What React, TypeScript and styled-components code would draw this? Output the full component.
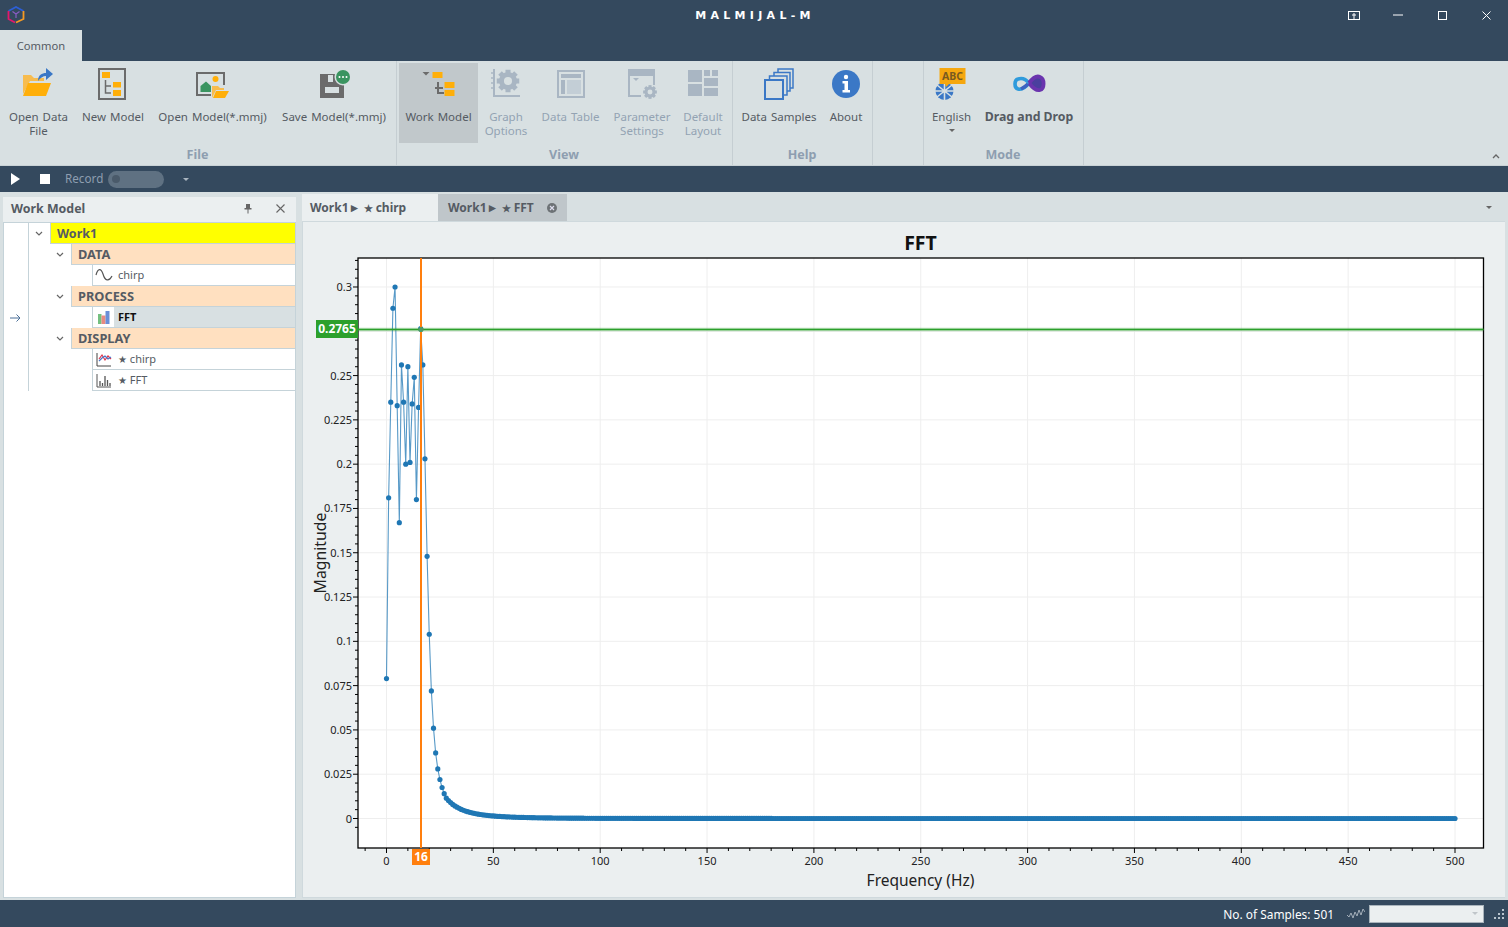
import React from "react"
import styled, { createGlobalStyle } from "styled-components"

const GlobalStyle = createGlobalStyle`
html, body { margin: 0; padding: 0; height: 100%; overflow: hidden; }
body { font-family: "Noto Sans", "Open Sans", sans-serif; font-size: 12px; color: #555b63; }
`
const Page = styled.div`
width: 1508px;
height: 927px;
display: flex;
flex-direction: column;
background: #d8e0e2;
`
const TitleBar = styled.div`
height: 30px;
background: #34495e;
display: grid;
grid-template-columns: 1fr auto 1fr;
align-items: center;
`
const Logo = styled.div`
display: flex;
padding-left: 7px;
`
const AppTitle = styled.div`
color: #fff;
font-family: "DejaVu Sans", sans-serif;
font-weight: bold;
font-size: 11px;
letter-spacing: 4.3px;
padding-left: 2px;
`
const WindowButtons = styled.div`
display: flex;
justify-content: flex-end;
`
const WindowButton = styled.div`
width: 44px;
height: 30px;
display: flex;
align-items: center;
justify-content: center;
`
const TabStrip = styled.div`
height: 31px;
background: #34495e;
display: flex;
`
const RibbonTab = styled.div`
width: 82px;
background: #d8e0e2;
display: flex;
align-items: center;
justify-content: center;
color: #555b63;
font-size: 11.2px;
padding-bottom: 1px;
box-sizing: border-box;
`
const Ribbon = styled.div`
height: 104px;
display: flex;
position: relative;
background: #d8e0e2;
border-bottom: 1px solid #c9d2d6;
`
const Group = styled.div<{ $w: number }>`
width: ${(p) => p.$w}px;
box-sizing: border-box;
border-right: 1px solid #c5ced2;
display: flex;
flex-direction: column;
padding: 2px 0 0 2px;
`
const GroupButtons = styled.div`
display: flex;
height: 80px;
`
const GroupName = styled.div`
text-align: center;
font-weight: bold;
color: #8e9eb0;
font-size: 12.5px;
line-height: 16px;
margin-top: 4px;
padding-right: 3px;
`
const RibbonButton = styled.div<{ $w: number; $active?: boolean; $off?: boolean; $bold?: boolean }>`
width: ${(p) => p.$w}px;
display: flex;
flex-direction: column;
align-items: center;
background: ${(p) => (p.$active ? "#c1c8cb" : "transparent")};
color: ${(p) => (p.$off ? "#93a3b3" : "#555b63")};
font-weight: ${(p) => (p.$bold ? "bold" : "normal")};
font-size: ${(p) => (p.$bold ? 12.3 : 11.5)}px;
word-spacing: ${(p) => (p.$bold ? 0 : 1)}px;
`
const IconSlot = styled.div`
height: 47px;
width: 100%;
flex: none;
display: flex;
justify-content: center;
`
const ButtonLabel = styled.div`
text-align: center;
line-height: 14px;
white-space: pre-line;
`
const Caret = styled.div`
width: 0;
height: 0;
margin-top: 5px;
border-left: 3px solid transparent;
border-right: 3px solid transparent;
border-top: 3px solid #666;
`
const Collapse = styled.div`
position: absolute;
right: 8px;
bottom: 6px;
display: flex;
`
const QuickBar = styled.div`
height: 26px;
background: #34495e;
display: flex;
align-items: center;
padding-left: 11px;
color: #8e9eb0;
`
const PlayIcon = styled.div`
width: 0;
height: 0;
border-top: 6px solid transparent;
border-bottom: 6px solid transparent;
border-left: 9px solid #fff;
`
const StopIcon = styled.div`
width: 10px;
height: 10px;
background: #fff;
margin-left: 20px;
`
const RecordLabel = styled.div`
margin-left: 15px;
font-size: 11.7px;
padding-bottom: 2px;
`
const Toggle = styled.div`
width: 56px;
height: 17px;
border-radius: 9px;
background: #5f7182;
margin-left: 5px;
display: flex;
align-items: center;
padding-left: 4px;
box-sizing: border-box;
`
const Knob = styled.div`
width: 8px;
height: 8px;
border-radius: 50%;
background: #4a5a6a;
`
const MenuCaret = styled.div`
width: 0;
height: 0;
margin-left: 19px;
border-left: 3.5px solid transparent;
border-right: 3.5px solid transparent;
border-top: 3.5px solid #aab5c0;
`
const Body = styled.div`
flex: 1;
min-height: 0;
display: flex;
padding: 2px 3px 2px 3px;
gap: 6px;
`
const SidePanel = styled.div`
width: 293px;
margin-top: 3px;
display: flex;
flex-direction: column;
`
const PanelHeader = styled.div`
height: 25px;
box-sizing: border-box;
background: #ebeff0;
display: flex;
align-items: center;
padding: 0 0 2px 8px;
font-weight: bold;
font-size: 12.4px;
color: #555b63;
`
const PanelTitle = styled.div`
flex: 1;
`
const PanelAction = styled.div`
width: 32px;
display: flex;
justify-content: center;
`
const Tree = styled.div`
flex: 1;
background: #fff;
border: 1px solid #c5d3d9;
box-sizing: border-box;
`
const TreeRow = styled.div`
height: 21px;
display: flex;
`
const RowMark = styled.div`
width: 25px;
flex: none;
border-right: 1px solid #c5d3d9;
display: flex;
align-items: center;
justify-content: center;
padding-right: 2px;
box-sizing: border-box;
`
const Indent = styled.div<{ $w: number }>`
width: ${(p) => p.$w}px;
flex: none;
display: flex;
align-items: center;
justify-content: center;
padding-right: 2px;
box-sizing: border-box;
`
const RowCell = styled.div<{ $bg: string; $bold?: boolean; $size?: number }>`
flex: 1;
min-width: 0;
box-sizing: border-box;
background: ${(p) => p.$bg};
border-left: 1px solid #c5d3d9;
border-bottom: 1px solid #c5d3d9;
display: flex;
align-items: center;
padding-left: 6px;
font-weight: ${(p) => (p.$bold ? "bold" : "normal")};
font-size: ${(p) => p.$size ?? 11}px;
color: #555b63;
`
const LeafIcon = styled.div`
width: 21px;
height: 20px;
margin-left: -6px;
background: #fff;
flex: none;
display: flex;
align-items: center;
justify-content: center;
`
const LeafText = styled.div<{ $strong?: boolean }>`
padding: 0 0 1px 4px;
font-weight: ${(p) => (p.$strong ? "bold" : "normal")};
color: ${(p) => (p.$strong ? "#111" : "#555b63")};
`
const Workspace = styled.div`
flex: 1;
min-width: 0;
display: flex;
flex-direction: column;
`
const DocTabs = styled.div`
height: 27px;
display: flex;
position: relative;
`
const DocTab = styled.div<{ $w: number; $selected?: boolean }>`
width: ${(p) => p.$w}px;
box-sizing: border-box;
background: ${(p) => (p.$selected ? "#ebeff0" : "#bfc6ca")};
display: flex;
align-items: center;
padding-left: ${(p) => (p.$selected ? 8 : 10)}px;
font-weight: bold;
font-size: 12px;
color: #555b63;
`
const CloseDot = styled.div`
margin-left: 13px;
display: flex;
`
const TabMenu = styled.div`
position: absolute;
right: 13px;
top: 12px;
width: 0;
height: 0;
border-left: 3px solid transparent;
border-right: 3px solid transparent;
border-top: 3px solid #666;
`
const ChartPanel = styled.div`
flex: 1;
min-height: 0;
background: #ebeff0;
border: 1px solid #cfd9dd;
border-right: none;
box-sizing: border-box;
`
const ChartSvg = styled.svg`
display: block;
width: 100%;
height: 100%;
font-family: "Noto Sans", "Open Sans", sans-serif;
`
const StatusBar = styled.div`
height: 27px;
background: #34495e;
display: flex;
align-items: center;
justify-content: flex-end;
color: #fff;
padding-right: 4px;
font-size: 11.9px;
`
const StatusSelect = styled.div`
width: 115px;
height: 18px;
box-sizing: border-box;
background: #ebeff0;
border: 1px solid #a9b4bc;
margin: 0 10px 0 4px;
display: flex;
align-items: center;
justify-content: flex-end;
padding-right: 5px;
`
const SelectCaret = styled.div`
width: 0;
height: 0;
border-left: 3px solid transparent;
border-right: 3px solid transparent;
border-top: 3px solid #c0c6ca;
`
const StatusText = styled.div`
margin-right: 13px;
`
const StarMark = styled.span`
font-size: 10px;
`

const AMBER = "#ffaf0a"
const GREY = "#6b6b6b"
const OFF = "#a9b6c3"
const BLUE = "#3b78c6"
const FACE = "#d8e0e2"

const Gear = ({ cx, cy, r, fill, hole }: { cx: number; cy: number; r: number; fill: string; hole: string }) => (
    <g>
        {[0, 45, 90, 135].map((a) => (
            <rect key={a} x={cx - r * 0.28} y={cy - r * 1.25} width={r * 0.56} height={r * 2.5} fill={fill} transform={`rotate(${a} ${cx} ${cy})`} />
        ))}
        <circle cx={cx} cy={cy} r={r} fill={fill} />
        <circle cx={cx} cy={cy} r={r * 0.45} fill={hole} />
    </g>
)

const Sketch: React.FC<{ w: number; h: number; mt?: number; children: React.ReactNode }> = ({ w, h, mt = 0, children }) => (
    <svg width={w} height={h} viewBox={`0 0 ${w} ${h}`} style={{ marginTop: mt }}>
        {children}
    </svg>
)

const OpenFileIcon = () => (
    <Sketch w={34} h={36} mt={3}>
        <path d="M1 9 H9 L12 12 H22 V15 H8 L1 28 Z" fill="#f7bc4e" />
        <path d="M6 17 H29 L24 30 H1 Z" fill={AMBER} />
        <path d="M16 15 C16 9 20 7 24 7 V2 L31 8 L24 14 V10 C21 10 18 12 16 15 Z" fill={BLUE} />
    </Sketch>
)
const NewModelIcon = () => (
    <Sketch w={30} h={36} mt={5}>
        <rect x="1" y="1" width="26" height="30" fill="none" stroke={GREY} strokeWidth="2" />
        <rect x="4" y="4" width="8" height="6" fill={AMBER} />
        <rect x="15" y="14" width="8" height="5.500" fill={AMBER} />
        <rect x="15" y="22" width="8" height="6" fill={AMBER} />
        <path d="M7.500 12 V25 H13 M7.500 18 H13" fill="none" stroke={GREY} strokeWidth="1.500" />
    </Sketch>
)
const OpenModelIcon = () => (
    <Sketch w={36} h={36} mt={9}>
        <path d="M16 23 H2 V1 H29 V13" fill="none" stroke={GREY} strokeWidth="2" />
        <path d="M5.500 20 V14 L11 9.500 L16 14 V20 Z" fill="#3a9460" />
        <circle cx="20.500" cy="7" r="3" fill={AMBER} />
        <path d="M17 14 H23 L25 16 H29 V18 H21 L17 26 Z" fill="#f7bc4e" />
        <path d="M21 19 H34 L30 26 H18 Z" fill={AMBER} />
    </Sketch>
)
const SaveIcon = () => (
    <Sketch w={36} h={36} mt={2}>
        <path d="M4 9 H24 L28 13 V33 H4 Z M12 10 V17 H17 V10 Z M9 22 V28 H23 V22 Z" fill={GREY} fillRule="evenodd" />
        <circle cx="27" cy="12" r="8.500" fill={FACE} />
        <circle cx="27" cy="12" r="7" fill="#3a9460" />
        <circle cx="23.500" cy="12" r="1" fill="#fff" />
        <circle cx="27" cy="12" r="1" fill="#fff" />
        <circle cx="30.500" cy="12" r="1" fill="#fff" />
    </Sketch>
)
const WorkModelIcon = () => (
    <Sketch w={36} h={36} mt={6}>
        <path d="M1.500 3 H8.500 L5 6.500 Z" fill={GREY} />
        <rect x="11.500" y="3" width="10" height="6" fill={AMBER} />
        <rect x="23.500" y="13" width="10" height="6" fill={AMBER} />
        <rect x="23.500" y="21" width="10" height="6" fill={AMBER} />
        <path d="M17 13 V24 H23 M14 19 H22" fill="none" stroke={GREY} strokeWidth="2" />
    </Sketch>
)
const GraphOptionsIcon = () => (
    <Sketch w={30} h={36} mt={6}>
        <path d="M3 0 V27 H29" fill="none" stroke={OFF} strokeWidth="2" />
        <path d="M0 4 H3 M0 9 H3 M0 14 H3 M0 19 H3" stroke={OFF} strokeWidth="1.500" />
        <Gear cx={17} cy={12} r={9} fill={OFF} hole={FACE} />
    </Sketch>
)
const DataTableIcon = () => (
    <Sketch w={30} h={36} mt={6}>
        <rect x="2" y="2" width="26" height="26" fill="none" stroke={OFF} strokeWidth="2" />
        <rect x="5" y="5" width="20" height="4" fill={OFF} />
        <rect x="5" y="11" width="4" height="14" fill={OFF} />
        <rect x="11" y="11" width="14" height="14" fill="#c3ced6" />
    </Sketch>
)
const ParameterIcon = () => (
    <Sketch w={32} h={36} mt={6}>
        <path d="M15 27 H3 V1 H28 V16" fill="none" stroke={OFF} strokeWidth="2" />
        <rect x="3" y="1" width="25" height="6" fill={OFF} />
        <path d="M7 9 H13 L10 12 Z" fill={OFF} />
        <Gear cx={24} cy={23} r={5.500} fill={OFF} hole={FACE} />
    </Sketch>
)
const LayoutIcon = () => (
    <Sketch w={32} h={36} mt={6}>
        <rect x="1" y="1" width="14" height="12" fill={OFF} />
        <rect x="1" y="15" width="14" height="12" fill={OFF} />
        <rect x="17" y="1" width="6" height="6" fill={OFF} />
        <rect x="25" y="1" width="6" height="6" fill={OFF} />
        <rect x="17" y="9" width="14" height="8" fill={OFF} />
        <rect x="17" y="19" width="14" height="8" fill={OFF} />
    </Sketch>
)
const SamplesIcon = () => (
    <Sketch w={32} h={36} mt={5}>
        <path d="M6.500 12 V8 H24 V27 H20 M11 8 V4.500 H27 V23 H24 M15 4.500 V1 H30 V20 H27" fill="none" stroke={BLUE} strokeWidth="1.500" />
        <rect x="2" y="12" width="18" height="19" fill={FACE} stroke={BLUE} strokeWidth="2" />
    </Sketch>
)
const AboutIcon = () => (
    <Sketch w={30} h={36} mt={6}>
        <circle cx="15" cy="15" r="14" fill={BLUE} />
        <circle cx="15" cy="8" r="2.200" fill="#fff" />
        <path d="M11.500 12 H17 V21 H19 V23.500 H11.500 V21 H13.500 V14.500 H11.500 Z" fill="#fff" />
    </Sketch>
)
const LanguageIcon = () => (
    <Sketch w={36} h={36} mt={4}>
        <circle cx="10.500" cy="24" r="9" fill={BLUE} />
        <path d="M1 24 H20 M10.500 15 V33 M3 18 L18 30 M18 18 L3 30" fill="none" stroke={FACE} strokeWidth="1.600" />
        <path d="M5.500 1 H31.500 V17 H15 L12 20 L11 17 H5.500 Z" fill="#f5a70f" />
        <text x="18.500" y="13" textAnchor="middle" fontSize="10.500" fontWeight="bold" fill="#7a5a20" fontFamily="Noto Sans, sans-serif">ABC</text>
    </Sketch>
)
const InfinityIcon = () => (
    <Sketch w={36} h={36} mt={11}>
        <path d="M18 9 C14 4 10 4 7 5 C3 6 3 14 7 15 C11 16 15 13 18 9" fill="none" stroke="#2f9bdc" strokeWidth="3.600" />
        <path d="M18 9 C21 5 25 1 29 3 C34 5 33.500 15 29 16 C25 17 21 13 18 9" fill="#4a3f9e" stroke="#6a34ae" strokeWidth="3.800" />
        <path d="M17 10 C14 13 12 14 10 15" fill="none" stroke="#3c62c0" strokeWidth="3.600" />
    </Sketch>
)
const LogoIcon = () => (
    <svg width="18" height="18" viewBox="0 0 18 18">
        <path d="M1.500 5 L9 1 L16.500 5" fill="none" stroke="#2c5fd6" strokeWidth="1.800" />
        <path d="M1.500 5 V13 L8 16.500" fill="none" stroke="#e0186c" strokeWidth="1.800" />
        <path d="M16.500 5 V13 L9 16.500" fill="none" stroke="#f59a23" strokeWidth="1.800" />
        <path d="M5.500 5.500 L9 8 L12.500 5.500 M9 8 V12" fill="none" stroke="#8a5cc4" strokeWidth="1.200" />
    </svg>
)
const SineIcon = () => (
    <svg width="18" height="16" viewBox="0 0 18 16">
        <path d="M1 8 C3 1 6 1 8 7 C10 14 14 15 17 9" fill="none" stroke="#555" strokeWidth="1.200" />
    </svg>
)
const BarsIcon = () => (
    <svg width="14" height="15" viewBox="0 0 14 15">
        <rect x="1" y="4" width="3.500" height="10" fill="#74c080" />
        <rect x="4.500" y="5.500" width="4" height="8.500" fill="#e88a80" />
        <rect x="8.500" y="1" width="4" height="13" fill="#6a8fd8" />
    </svg>
)
const LineChartIcon = () => (
    <svg width="16" height="15" viewBox="0 0 16 15">
        <path d="M1 1 V14 H15" fill="none" stroke="#444" strokeWidth="1" />
        <path d="M3 7 L6 3 L9 8 L12 4 L15 7" fill="none" stroke="#e0334a" strokeWidth="1.200" />
        <path d="M3 9 L6 6 L9 4 L12 7 L15 5" fill="none" stroke="#4a78c8" strokeWidth="1.200" />
    </svg>
)
const BarChartIcon = () => (
    <svg width="16" height="15" viewBox="0 0 16 15">
        <path d="M1 1 V14 H15" fill="none" stroke="#555" strokeWidth="1" />
        <path d="M4 13 V8 M6.500 13 V10 M9 13 V3 M11.500 13 V7 M14 13 V10" stroke="#555" strokeWidth="1.300" />
    </svg>
)
const Chevron = () => (
    <svg width="8" height="6" viewBox="0 0 8 6">
        <path d="M1 1 L4 4 L7 1" fill="none" stroke="#666" strokeWidth="1.200" />
    </svg>
)

const WindowIcons = [
    <svg key="a" width="12" height="9" viewBox="0 0 12 9"><rect x="0.500" y="0.500" width="11" height="8" fill="none" stroke="#fff" /><path d="M6 2 V8 M4 4 H8" stroke="#fff" /></svg>,
    <svg key="b" width="10" height="2" viewBox="0 0 10 2"><path d="M0 1 H10" stroke="#fff" /></svg>,
    <svg key="c" width="9" height="9" viewBox="0 0 9 9"><rect x="0.500" y="0.500" width="8" height="8" fill="none" stroke="#fff" /></svg>,
    <svg key="d" width="9" height="9" viewBox="0 0 9 9"><path d="M0.500 0.500 L8.500 8.500 M8.500 0.500 L0.500 8.500" stroke="#fff" /></svg>,
]

const X0 = 386.5
const XS = 2.137
const Y0 = 818.5
const YS = 1771.67
const L = 358
const R = 1483.5
const T = 258
const B = 848

const head = [0.079, 0.181, 0.235, 0.288, 0.3, 0.233, 0.167, 0.256, 0.235, 0.2, 0.255, 0.201, 0.234, 0.249, 0.18, 0.232, 0.2765, 0.256, 0.203, 0.148, 0.104, 0.072, 0.051, 0.037, 0.028, 0.022, 0.0175, 0.014, 0.0115]
const samples = Array.from({ length: 501 }, (_, i) => (i < head.length ? head[i] : 0.0115 * Math.pow(28 / i, 3.6)))
const points = samples.map((v, i) => [X0 + XS * i, Y0 - YS * v] as const)
const xMajor = Array.from({ length: 11 }, (_, i) => i * 50)
const xMinor = Array.from({ length: 52 }, (_, i) => i * 10 - 10)
const yMajor = Array.from({ length: 13 }, (_, i) => i * 25)
const yMinor = Array.from({ length: 67 }, (_, i) => i * 5 - 5)

const Chart = () => {
    const px = (f: number) => X0 + XS * f
    const py = (m: number) => Y0 - (YS * m) / 1000
    return (
        <ChartSvg viewBox="303 222 1202 675" preserveAspectRatio="none">
            <rect x={L} y={T} width={R - L} height={B - T} fill="#fff" />
            {xMajor.map((f) => <line key={f} x1={px(f)} x2={px(f)} y1={T} y2={B} stroke="#eeeeee" strokeWidth="1" />)}
            {yMajor.map((m) => <line key={m} x1={L} x2={R} y1={py(m)} y2={py(m)} stroke="#eeeeee" strokeWidth="1" />)}
            <polyline points={points.map((p) => p.join(",")).join(" ")} fill="none" stroke="#1f77b4" strokeWidth="1.100" opacity="0.75" />
            {points.map(([x, y], i) => <circle key={i} cx={x} cy={y} r="2.600" fill="#1f77b4" />)}
            <rect x={L} y={T} width={R - L} height={B - T} fill="none" stroke="#000" strokeWidth="1.300" />
            {xMinor.filter((f) => px(f) > L && px(f) < R).map((f) => <line key={f} x1={px(f)} x2={px(f)} y1={B} y2={B + (f % 50 === 0 ? 5 : 3)} stroke="#000" />)}
            {yMinor.filter((m) => py(m) > T && py(m) < B).map((m) => <line key={m} x1={L} x2={L - (m % 25 === 0 ? 5 : 3)} y1={py(m)} y2={py(m)} stroke="#000" />)}
            {xMajor.map((f) => <text key={f} x={px(f)} y={864.500} textAnchor="middle" fontSize="11" fill="#222">{f}</text>)}
            {yMajor.filter((m) => m !== 275).map((m) => <text key={m} x={352} y={py(m) + 4} textAnchor="end" fontSize="11" fill="#222">{m / 1000}</text>)}
            <text x="920.500" y="250" textAnchor="middle" fontSize="19.500" fontWeight="bold" fill="#111">FFT</text>
            <text x="920.500" y="885.500" textAnchor="middle" fontSize="15.500" fill="#222">Frequency (Hz)</text>
            <text transform="translate(325.500 553) rotate(-90)" textAnchor="middle" fontSize="15.800" fill="#222">Magnitude</text>
            <line x1={L} x2={R} y1="329.500" y2="329.500" stroke="#2ca02c" strokeWidth="3.500" opacity="0.3" />
            <line x1={L} x2={R} y1="329.500" y2="329.500" stroke="#2ca02c" strokeWidth="1.600" />
            <line x1="421" x2="421" y1={T} y2={B} stroke="#ff7f0e" strokeWidth="2" />
            <circle cx="421" cy="329.500" r="2.600" fill="#4d9a6a" />
            <rect x="316" y="320" width="42" height="18" fill="#2ca02c" />
            <text x="337" y="333" textAnchor="middle" fontSize="12" fontWeight="bold" fill="#fff">0.2765</text>
            <rect x="412" y="849" width="18" height="16" fill="#ff7f0e" />
            <text x="421" y="861" textAnchor="middle" fontSize="12" fontWeight="bold" fill="#fff">16</text>
        </ChartSvg>
    )
}

const Star = () => <StarMark>★</StarMark>

const App: React.FC = () => (
    <Page>
        <GlobalStyle />
        <TitleBar>
            <Logo><LogoIcon /></Logo>
            <AppTitle>MALMIJAL-M</AppTitle>
            <WindowButtons>
                {WindowIcons.map((icon, i) => <WindowButton key={i}>{icon}</WindowButton>)}
            </WindowButtons>
        </TitleBar>
        <TabStrip>
            <RibbonTab>Common</RibbonTab>
        </TabStrip>
        <Ribbon>
            <Group $w={397}>
                <GroupButtons>
                    <RibbonButton $w={73}><IconSlot><OpenFileIcon /></IconSlot><ButtonLabel>{"Open Data\nFile"}</ButtonLabel></RibbonButton>
                    <RibbonButton $w={76}><IconSlot><NewModelIcon /></IconSlot><ButtonLabel>New Model</ButtonLabel></RibbonButton>
                    <RibbonButton $w={123}><IconSlot><OpenModelIcon /></IconSlot><ButtonLabel>Open Model(*.mmj)</ButtonLabel></RibbonButton>
                    <RibbonButton $w={120}><IconSlot><SaveIcon /></IconSlot><ButtonLabel>Save Model(*.mmj)</ButtonLabel></RibbonButton>
                </GroupButtons>
                <GroupName>File</GroupName>
            </Group>
            <Group $w={336}>
                <GroupButtons>
                    <RibbonButton $w={79} $active><IconSlot><WorkModelIcon /></IconSlot><ButtonLabel>Work Model</ButtonLabel></RibbonButton>
                    <RibbonButton $w={56} $off><IconSlot><GraphOptionsIcon /></IconSlot><ButtonLabel>{"Graph\nOptions"}</ButtonLabel></RibbonButton>
                    <RibbonButton $w={73} $off><IconSlot><DataTableIcon /></IconSlot><ButtonLabel>Data Table</ButtonLabel></RibbonButton>
                    <RibbonButton $w={70} $off><IconSlot><ParameterIcon /></IconSlot><ButtonLabel>{"Parameter\nSettings"}</ButtonLabel></RibbonButton>
                    <RibbonButton $w={52} $off><IconSlot><LayoutIcon /></IconSlot><ButtonLabel>{"Default\nLayout"}</ButtonLabel></RibbonButton>
                </GroupButtons>
                <GroupName>View</GroupName>
            </Group>
            <Group $w={140}>
                <GroupButtons>
                    <RibbonButton $w={88}><IconSlot><SamplesIcon /></IconSlot><ButtonLabel>Data Samples</ButtonLabel></RibbonButton>
                    <RibbonButton $w={46}><IconSlot><AboutIcon /></IconSlot><ButtonLabel>About</ButtonLabel></RibbonButton>
                </GroupButtons>
                <GroupName>Help</GroupName>
            </Group>
            <Group $w={51} />
            <Group $w={160}>
                <GroupButtons>
                    <RibbonButton $w={51}><IconSlot><LanguageIcon /></IconSlot><ButtonLabel>English</ButtonLabel><Caret /></RibbonButton>
                    <RibbonButton $w={104} $bold><IconSlot><InfinityIcon /></IconSlot><ButtonLabel>Drag and Drop</ButtonLabel></RibbonButton>
                </GroupButtons>
                <GroupName>Mode</GroupName>
            </Group>
            <Collapse>
                <svg width="8" height="6" viewBox="0 0 8 6"><path d="M1 5 L4 2 L7 5" fill="none" stroke="#666" strokeWidth="1.300" /></svg>
            </Collapse>
        </Ribbon>
        <QuickBar>
            <PlayIcon />
            <StopIcon />
            <RecordLabel>Record</RecordLabel>
            <Toggle><Knob /></Toggle>
            <MenuCaret />
        </QuickBar>
        <Body>
            <SidePanel>
                <PanelHeader>
                    <PanelTitle>Work Model</PanelTitle>
                    <PanelAction>
                        <svg width="8" height="11" viewBox="0 0 8 11"><path d="M2 1 H6 V5 H7.500 V6.500 H4.500 V10.500 H3.500 V6.500 H0.500 V5 H2 Z" fill="#666" /></svg>
                    </PanelAction>
                    <PanelAction>
                        <svg width="9" height="9" viewBox="0 0 9 9"><path d="M0.500 0.500 L8.500 8.500 M8.500 0.500 L0.500 8.500" stroke="#666" strokeWidth="1.100" /></svg>
                    </PanelAction>
                </PanelHeader>
                <Tree>
                    <TreeRow><RowMark /><Indent $w={21}><Chevron /></Indent><RowCell $bg="#ffff00" $bold $size={12.500}>Work1</RowCell></TreeRow>
                    <TreeRow><RowMark /><Indent $w={21} /><Indent $w={21}><Chevron /></Indent><RowCell $bg="#ffe0c0" $bold $size={12.800}>DATA</RowCell></TreeRow>
                    <TreeRow><RowMark /><Indent $w={42} /><Indent $w={21} /><RowCell $bg="#fff"><LeafIcon><SineIcon /></LeafIcon><LeafText>chirp</LeafText></RowCell></TreeRow>
                    <TreeRow><RowMark /><Indent $w={21} /><Indent $w={21}><Chevron /></Indent><RowCell $bg="#ffe0c0" $bold $size={12.800}>PROCESS</RowCell></TreeRow>
                    <TreeRow>
                        <RowMark>
                            <svg width="11" height="8" viewBox="0 0 11 8"><path d="M0 4 H10 M6.500 0.500 L10 4 L6.500 7.500" fill="none" stroke="#4a6f98" /></svg>
                        </RowMark>
                        <Indent $w={42} /><Indent $w={21} />
                        <RowCell $bg="#d8e0e2"><LeafIcon><BarsIcon /></LeafIcon><LeafText $strong>FFT</LeafText></RowCell>
                    </TreeRow>
                    <TreeRow><RowMark /><Indent $w={21} /><Indent $w={21}><Chevron /></Indent><RowCell $bg="#ffe0c0" $bold $size={12.800}>DISPLAY</RowCell></TreeRow>
                    <TreeRow><RowMark /><Indent $w={42} /><Indent $w={21} /><RowCell $bg="#fff"><LeafIcon><LineChartIcon /></LeafIcon><LeafText><Star /> chirp</LeafText></RowCell></TreeRow>
                    <TreeRow><RowMark /><Indent $w={42} /><Indent $w={21} /><RowCell $bg="#fff"><LeafIcon><BarChartIcon /></LeafIcon><LeafText><Star /> FFT</LeafText></RowCell></TreeRow>
                </Tree>
            </SidePanel>
            <Workspace>
                <DocTabs>
                    <DocTab $w={136} $selected>Work1►&nbsp;<Star />&nbsp;chirp</DocTab>
                    <DocTab $w={129}>
                        Work1►&nbsp;<Star />&nbsp;FFT
                        <CloseDot>
                            <svg width="10" height="10" viewBox="0 0 10 10">
                                <circle cx="5" cy="5" r="5" fill="#6d7276" />
                                <path d="M3 3 L7 7 M7 3 L3 7" stroke="#dde" strokeWidth="1.200" />
                            </svg>
                        </CloseDot>
                    </DocTab>
                    <TabMenu />
                </DocTabs>
                <ChartPanel><Chart /></ChartPanel>
            </Workspace>
        </Body>
        <StatusBar>
            <StatusText>No. of Samples: 501</StatusText>
            <svg width="18" height="12" viewBox="0 0 18 12">
                <path d="M0 7 L2 9 L4 5 L6 10 L8 4 L10 8 L12 2 L14 7 L16 1 L18 4" fill="none" stroke="#aeb8c2" strokeWidth="0.900" />
            </svg>
            <StatusSelect><SelectCaret /></StatusSelect>
            <svg width="10" height="10" viewBox="0 0 10 10">
                <path d="M8 0 h2 v2 h-2 z M4 4 h2 v2 h-2 z M8 4 h2 v2 h-2 z M0 8 h2 v2 h-2 z M4 8 h2 v2 h-2 z M8 8 h2 v2 h-2 z" fill="#b9c4ce" />
            </svg>
        </StatusBar>
    </Page>
)

export default App
